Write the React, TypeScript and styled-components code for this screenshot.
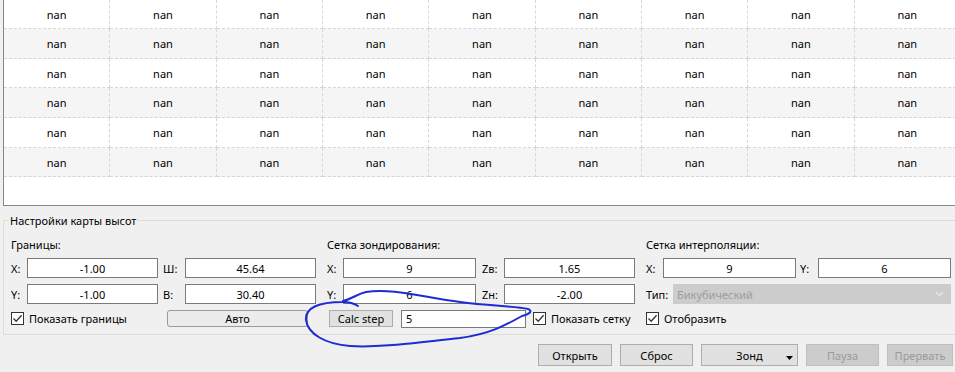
import styled, { createGlobalStyle } from "styled-components"

const COLUMNS = 9
const ROWS = 6

const GlobalStyle = createGlobalStyle`
    html, body {
        margin: 0;
        padding: 0;
        background: #f0f0f0;
        overflow: hidden;
    }
    body {
        font-family: "Noto Sans", "Liberation Sans", sans-serif;
        font-size: 11px;
        color: #000;
    }
    input, button {
        font: inherit;
    }
`

interface CheckProps {
    label: string;
}

const Check = ({ label }: CheckProps) => {
    return <CheckField>
        <CheckBox>
            <svg width="11" height="11" viewBox="0 0 11 11">
                <polyline points="1.5,5.5 4.2,8.3 9.6,2.2" fill="none" stroke="#333" strokeWidth="1.3" />
            </svg>
        </CheckBox>
        <span>{label}</span>
    </CheckField>
}

const App = () => {
    const rows = Array.from({ length: ROWS }, (_, r) => r)
    const cols = Array.from({ length: COLUMNS }, (_, c) => c)

    return <Screen>
        <GlobalStyle />
        <TableFrame>
            <DataGrid>
                {rows.map(r => cols.map(c =>
                    <Cell key={`${r}-${c}`} $shade={r % 2 === 1}>nan</Cell>
                ))}
            </DataGrid>
        </TableFrame>

        <GroupBox>
            <GroupTitle>Настройки карты высот</GroupTitle>
            <Sections>
                <Section>
                    <SectionTitle>Границы:</SectionTitle>
                    <FieldGrid $cols="16px 131px 27px 131px">
                        <FieldLabel>X:</FieldLabel>
                        <TextBox readOnly value="-1.00" />
                        <FieldLabel $pad={5}>Ш:</FieldLabel>
                        <TextBox readOnly value="45.64" />
                        <FieldLabel>Y:</FieldLabel>
                        <TextBox readOnly value="-1.00" />
                        <FieldLabel $pad={5}>В:</FieldLabel>
                        <TextBox readOnly value="30.40" />
                    </FieldGrid>
                    <ActionRow>
                        <CheckSlot $w={156}>
                            <Check label="Показать границы" />
                        </CheckSlot>
                        <AutoButton>Авто</AutoButton>
                    </ActionRow>
                </Section>

                <Section>
                    <SectionTitle>Сетка зондирования:</SectionTitle>
                    <FieldGrid $cols="16px 133px 28px 131px">
                        <FieldLabel>X:</FieldLabel>
                        <TextBox readOnly value="9" />
                        <FieldLabel $pad={6}>Zв:</FieldLabel>
                        <TextBox readOnly value="1.65" />
                        <FieldLabel>Y:</FieldLabel>
                        <TextBox readOnly value="6" />
                        <FieldLabel $pad={6}>Zн:</FieldLabel>
                        <TextBox readOnly value="-2.00" />
                    </FieldGrid>
                    <ActionRow>
                        <CalcButton>Calc step</CalcButton>
                        <StepBox readOnly value="5" $align="left" />
                        <Check label="Показать сетку" />
                    </ActionRow>
                </Section>

                <Section>
                    <SectionTitle>Сетка интерполяции:</SectionTitle>
                    <FieldGrid $cols="17px 133px 22px 133px">
                        <FieldLabel>X:</FieldLabel>
                        <TextBox readOnly value="9" />
                        <FieldLabel $pad={4}>Y:</FieldLabel>
                        <TextBox readOnly value="6" />
                    </FieldGrid>
                    <TypeRow>
                        <TypeLabel>Тип:</TypeLabel>
                        <Combo>
                            <span>Бикубический</span>
                            <svg width="9" height="6" viewBox="0 0 9 6">
                                <polyline points="1,1 4.5,4.5 8,1" fill="none" stroke="#e6e6e6" strokeWidth="1.5" />
                            </svg>
                        </Combo>
                    </TypeRow>
                    <ActionRow>
                        <Check label="Отобразить" />
                    </ActionRow>
                </Section>
            </Sections>
        </GroupBox>

        <ButtonBar>
            <PushButton $w={74}>Открыть</PushButton>
            <PushButton $w={73}>Сброс</PushButton>
            <PushButton $w={97}>
                Зонд
                <MenuArrow width="7" height="4" viewBox="0 0 7 4">
                    <polygon points="0,0 7,0 3.5,4" fill="#000" />
                </MenuArrow>
            </PushButton>
            <PushButton $w={73} disabled>Пауза</PushButton>
            <PushButton $w={66} disabled>Прервать</PushButton>
        </ButtonBar>

        <Scribble width="955" height="372" viewBox="0 0 955 372">
            <path
                d="M 343 301 C 352 299, 357 294, 366 292 C 392 288, 422 297, 460 302 C 490 306, 514 306, 528 309 C 533 311, 530 314, 522 316 C 506 325, 490 334, 460 338 C 420 342, 380 348, 350 346 C 325 344, 308 334, 306 320 C 305 308, 318 302, 343 302 C 350 302, 355 304, 358 306"
                fill="none"
                stroke="#1f2bd3"
                strokeWidth="2"
                strokeLinecap="round"
            />
        </Scribble>
    </Screen>
}

const Screen = styled.div`
    position: relative;
    width: 955px;
    height: 372px;
    overflow: hidden;
    background: #f0f0f0;
`

const TableFrame = styled.div`
    margin-left: 3px;
    width: 960px;
    height: 205px;
    background: #fff;
    border-left: 1px solid #828790;
    border-bottom: 1px solid #828790;
    overflow: hidden;
`

const DataGrid = styled.div`
    display: grid;
    grid-template-columns: repeat(9, 106.33px);
    grid-template-rows: 29px repeat(5, 29.7px);
`

const Cell = styled.div<{ $shade: boolean }>`
    display: flex;
    align-items: center;
    justify-content: center;
    box-sizing: border-box;
    background: ${p => p.$shade ? "#f5f5f5" : "#fff"};
    border-right: 1px dashed #d6d6d6;
    border-bottom: 1px dashed #d6d6d6;
`

const GroupBox = styled.fieldset`
    margin: 5px 0 0 3px;
    padding: 8px 0 6px 7px;
    width: 970px;
    min-width: 0;
    box-sizing: border-box;
    border: 1px solid #dcdcdc;
`

const GroupTitle = styled.legend`
    margin-left: -2px;
    padding: 2px 1px 0;
    line-height: 16px;
`

const Sections = styled.div`
    display: grid;
    grid-template-columns: 305px 308px 305px;
    column-gap: 11px;
`

const Section = styled.div`
    display: flex;
    flex-direction: column;
`

const SectionTitle = styled.div`
    line-height: 16px;
    margin-bottom: 5px;
`

const FieldGrid = styled.div<{ $cols: string }>`
    display: grid;
    grid-template-columns: ${p => p.$cols};
    grid-auto-rows: 20px;
    row-gap: 6px;
    align-items: center;
`

const FieldLabel = styled.span<{ $pad?: number }>`
    padding-left: ${p => p.$pad ?? 0}px;
    white-space: nowrap;
`

const TextBox = styled.input<{ $align?: "left" | "center" }>`
    box-sizing: border-box;
    width: 100%;
    height: 20px;
    margin: 0;
    padding: 0 4px;
    border: 1px solid #7a7a7a;
    border-radius: 0;
    background: #fff;
    color: #000;
    text-align: ${p => p.$align ?? "center"};
    outline: none;
`

const StepBox = styled(TextBox)`
    width: 125px;
    height: 18px;
    margin-left: 8px;
    margin-right: 7px;
`

const ActionRow = styled.div`
    display: flex;
    align-items: center;
    height: 19px;
    margin-top: 5px;
`

const CheckSlot = styled.div<{ $w: number }>`
    width: ${p => p.$w}px;
`

const CheckField = styled.label`
    display: flex;
    align-items: center;
    gap: 5px;
    white-space: nowrap;
`

const CheckBox = styled.span`
    display: flex;
    align-items: center;
    justify-content: center;
    box-sizing: border-box;
    width: 13px;
    height: 13px;
    border: 1px solid #333;
    background: #fff;
`

const AutoButton = styled.button`
    box-sizing: border-box;
    width: 141px;
    height: 17px;
    padding: 0;
    border: 1px solid #9a9a9a;
    border-radius: 3px;
    background: #ececec;
    color: #000;
    line-height: 15px;
`

const CalcButton = styled.button`
    box-sizing: border-box;
    width: 64px;
    height: 17px;
    margin-left: 2px;
    padding: 0;
    border: 1px solid #adadad;
    background: #e1e1e1;
    color: #000;
    line-height: 15px;
`

const TypeRow = styled.div`
    display: flex;
    align-items: center;
    height: 20px;
    margin-top: 6px;
`

const TypeLabel = styled.span`
    width: 27px;
`

const Combo = styled.div`
    flex: 1;
    display: flex;
    align-items: center;
    justify-content: space-between;
    box-sizing: border-box;
    height: 20px;
    padding: 0 6px 0 3px;
    background: #cccccc;
    border: 1px solid #cccccc;
    color: #9d9d9d;
`

const ButtonBar = styled.div`
    display: flex;
    justify-content: flex-end;
    gap: 8px;
    margin-top: 9px;
    padding-right: 2px;
`

const PushButton = styled.button<{ $w: number }>`
    position: relative;
    box-sizing: border-box;
    width: ${p => p.$w}px;
    height: 22px;
    padding: 0;
    border: 1px solid #adadad;
    background: #e1e1e1;
    color: #000;

    &:disabled {
        background: #cccccc;
        border-color: #bfbfbf;
        color: #9a9a9a;
    }
`

const MenuArrow = styled.svg`
    position: absolute;
    right: 4px;
    bottom: 5px;
`

const Scribble = styled.svg`
    position: absolute;
    left: 0;
    top: 0;
    pointer-events: none;
`

export default App
